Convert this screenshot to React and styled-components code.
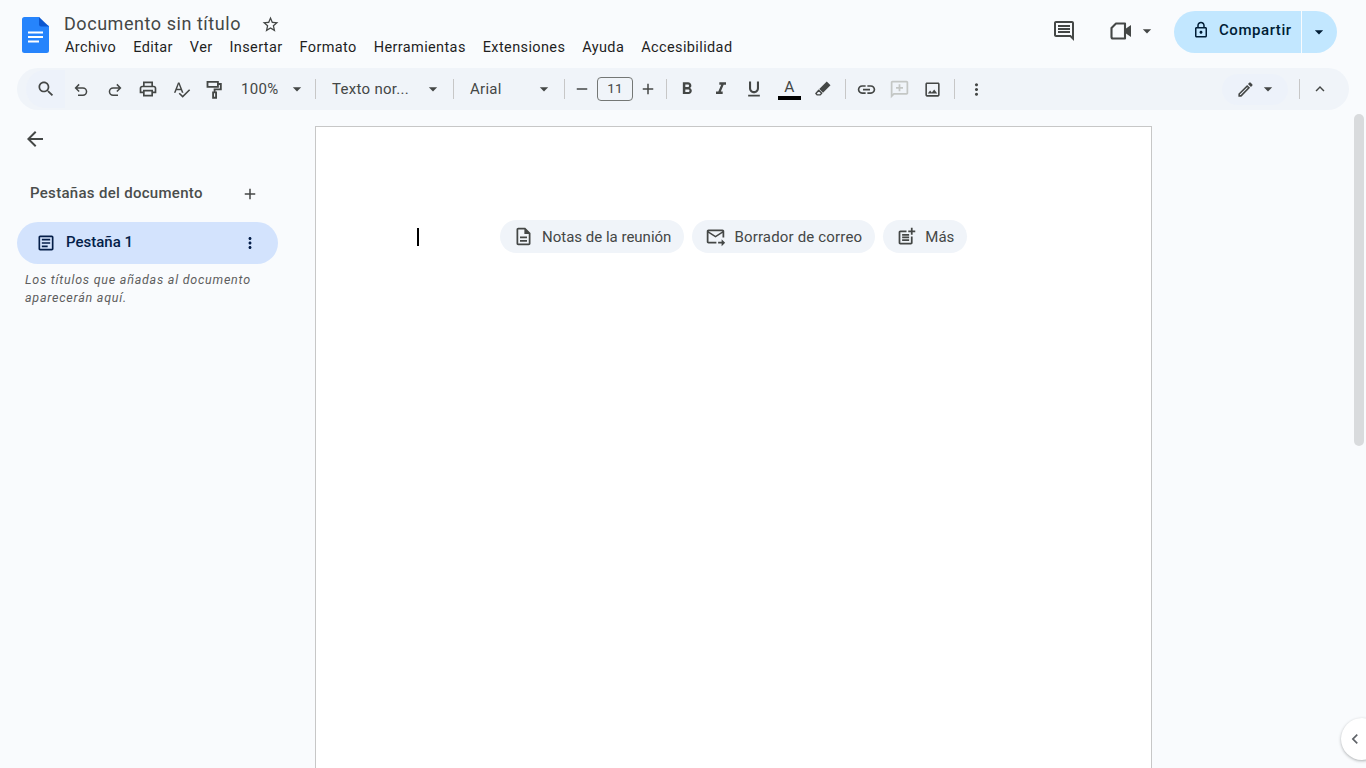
import React from 'react';
import styled, { createGlobalStyle } from 'styled-components';

const Global = createGlobalStyle`
  html, body { margin: 0; padding: 0; height: 100%; overflow: hidden; background: #f9fbfd; }
  * { box-sizing: border-box; }
  body { font-family: Roboto, "Liberation Sans", sans-serif; color: #444746; }
`;

const Page = styled.div`
  position: relative;
  width: 1366px;
  height: 768px;
  overflow: hidden;
  background: #f9fbfd;
  display: flex;
  flex-direction: column;
`;

const Header = styled.header`
  height: 68px;
  flex: none;
  display: flex;
  align-items: flex-start;
  padding: 17px 29px 0 22px;
`;
const LogoWrap = styled.div`
  width: 27px;
  height: 36px;
  flex: none;
  margin-right: 15px;
`;
const TitleCol = styled.div`
  display: flex;
  flex-direction: column;
`;
const TitleRow = styled.div`
  display: flex;
  align-items: center;
  height: 16px;
  margin-top: -1px;
`;
const Title = styled.div`
  font-size: 18px;
  letter-spacing: 0.55px;
  color: #444746;
  line-height: 16px;
  white-space: nowrap;
`;
const StarWrap = styled.span`
  display: flex;
  margin-left: 20px;
  color: #444746;
`;
const Menu = styled.nav`
  display: flex;
  gap: 17px;
  margin-top: 8px;
  margin-left: 1px;
`;
const MenuItem = styled.span`
  font-size: 14.5px;
  letter-spacing: 0.38px;
  line-height: 16px;
  color: #1f1f1f;
  white-space: nowrap;
`;
const HeaderRight = styled.div`
  margin-left: auto;
  display: flex;
  align-items: center;
  margin-top: -6px;
  height: 42px;
`;
const HeadIcon = styled.span`
  display: flex;
  margin-top: -2px;
  color: #444746;
`;
const VideoGroup = styled.span`
  display: flex;
  align-items: center;
  gap: 4px;
  margin-left: 33px;
  margin-top: -2px;
  color: #444746;
`;
const Share = styled.div`
  display: flex;
  margin-left: 17px;
  height: 42px;
  width: 163px;
  border-radius: 21px;
  overflow: hidden;
  background: #c2e7ff;
  color: #001d35;
`;
const ShareMain = styled.div`
  width: 127px;
  display: flex;
  align-items: center;
  padding: 0 0 4px 18px;
  gap: 9px;
  font-size: 15px;
  font-weight: 500;
  letter-spacing: 0.55px;
`;
const ShareDrop = styled.div`
  flex: 1;
  border-left: 1px solid #f9fbfd;
  display: flex;
  align-items: center;
  justify-content: center;
  padding-right: 2px;
`;

const Toolbar = styled.div`
  flex: none;
  margin: 0 17px;
  height: 42px;
  width: 1332px;
  border-radius: 21px;
  background: #f0f4f9;
  display: flex;
  align-items: center;
  padding-left: 9px;
  color: #444746;
`;
const SearchBtn = styled.span`
  width: 39px;
  height: 38px;
  border-radius: 19px 0 0 19px;
  background: #edf2fa;
  display: flex;
  align-items: center;
  justify-content: center;
`;
const ToolBtn = styled.span`
  width: 33.4px;
  height: 32px;
  flex: none;
  display: flex;
  align-items: center;
  justify-content: center;
  margin-left: ${p => p.$ml ?? 0}px;
  color: ${p => p.$muted ? '#c4c7c5' : '#444746'};
`;
const HookWrap = styled.span`
  display: flex;
  margin: 2px 1px 0 0;
`;
const Drop = styled.span`
  width: ${p => p.$w}px;
  flex: none;
  display: flex;
  align-items: center;
  justify-content: space-between;
  padding: 0 ${p => p.$pr ?? 3}px 0 9px;
  font-size: 15px;
  letter-spacing: 0.3px;
  color: #444746;
  white-space: nowrap;
`;
const Sep = styled.span`
  width: 1px;
  height: 20px;
  flex: none;
  background: #c7c7c7;
  margin: 0 ${p => p.$r ?? 7}px 0 ${p => p.$l ?? 7}px;
`;
const SizeBtn = styled.span`
  width: 20px;
  flex: none;
  display: flex;
  justify-content: center;
`;
const SizeBox = styled.span`
  width: 36px;
  height: 24px;
  flex: none;
  margin: 0 5px;
  border: 1px solid #747775;
  border-radius: 4px;
  display: flex;
  align-items: center;
  justify-content: center;
  font-size: 13.5px;
  color: #444746;
  padding-bottom: 2px;
`;
const ColorA = styled.span`
  display: flex;
  flex-direction: column;
  align-items: center;
  width: 23px;
`;
const ColorLetter = styled.span`
  font-size: 15.5px;
  line-height: 18px;
  color: #444746;
`;
const ColorBar = styled.span`
  width: 23px;
  height: 4px;
  background: #000;
`;
const ToolRight = styled.div`
  margin-left: auto;
  display: flex;
  align-items: center;
`;
const ModePill = styled.span`
  width: 66px;
  height: 31px;
  border-radius: 16px;
  background: #edf2fa;
  display: flex;
  align-items: center;
  padding-left: 14px;
  gap: 3px;
`;
const ModeSep = styled.span`
  width: 1px;
  height: 20px;
  background: #c7c7c7;
  margin-left: 11px;
`;
const Collapse = styled.span`
  width: 40px;
  margin-right: 9px;
  display: flex;
  justify-content: center;
`;

const Body = styled.div`
  flex: 1;
  display: flex;
  min-height: 0;
`;
const Side = styled.aside`
  width: 315px;
  flex: none;
  padding: 17px 0 0 17px;
`;
const BackBtn = styled.div`
  display: flex;
  margin-left: 6px;
  color: #444746;
`;
const SideHead = styled.div`
  display: flex;
  align-items: center;
  margin-top: 33px;
  margin-left: 13px;
  width: 229px;
  justify-content: space-between;
  height: 20px;
`;
const SideTitle = styled.span`
  font-size: 15px;
  font-weight: 500;
  letter-spacing: 0.3px;
  color: #4a4d4c;
  margin-top: -2px;
`;
const TabItem = styled.div`
  margin-top: 18px;
  width: 261px;
  height: 42px;
  border-radius: 21px;
  background: #d3e3fd;
  display: flex;
  align-items: center;
  padding: 0 19px;
  color: #041e49;
`;
const TabText = styled.span`
  margin: 0 0 3px 10px;
  flex: 1;
  font-size: 15px;
  font-weight: 500;
`;
const Hint = styled.p`
  margin: 7px 0 0 8px;
  width: 250px;
  font-size: 12.5px;
  font-style: italic;
  line-height: 18px;
  letter-spacing: 0.76px;
  color: #5e5e5e;
`;
const Doc = styled.main`
  width: 837px;
  height: 700px;
  margin-top: 16px;
  flex: none;
  background: #fff;
  border: 1px solid #c7c7c7;
  border-bottom: 0;
  display: flex;
  align-items: flex-start;
  padding: 93px 0 0 184px;
  position: relative;
`;
const Cursor = styled.span`
  position: absolute;
  left: 101px;
  top: 101px;
  width: 2px;
  height: 18px;
  background: #000;
`;
const Chips = styled.div`
  display: flex;
  gap: 8px;
`;
const Chip = styled.div`
  height: 33px;
  border-radius: 17px;
  background: #f0f4f9;
  display: flex;
  align-items: center;
  padding: 0 13px;
  gap: 8px;
  font-size: 15px;
  letter-spacing: ${p => p.$ls ?? 0}px;
  color: #444746;
  white-space: nowrap;
`;
const ChipLabel = styled.span`
  margin-top: 1px;
`;
const Scrollbar = styled.div`
  position: absolute;
  left: 1354px;
  top: 114px;
  width: 10px;
  height: 332px;
  border-radius: 5px;
  background: #d9dbdd;
`;
const SideToggle = styled.div`
  position: absolute;
  left: 1341px;
  top: 718px;
  width: 42px;
  height: 42px;
  border-radius: 50%;
  background: #fff;
  box-shadow: 0 1px 3px rgba(60,64,67,.4);
  display: flex;
  align-items: center;
  padding-left: 4px;
  color: #5f6368;
`;

const I = ({ s = 18, d, children, fill = 'currentColor' }) => (
  <svg width={s} height={s} viewBox="0 0 24 24" fill={fill} aria-hidden="true">
    {d && <path d={d} />}
    {children}
  </svg>
);
const Caret = ({ c = 'currentColor' }) => (
  <svg width="20" height="20" viewBox="0 0 24 24" fill={c} aria-hidden="true"><path d="M7 10l5 5 5-5z" /></svg>
);

const Logo = () => (
  <svg width="27" height="36" viewBox="0 0 27 36" aria-hidden="true">
    <path d="M17 0H2.5A2.5 2.5 0 0 0 0 2.5v31A2.5 2.5 0 0 0 2.5 36h22a2.5 2.5 0 0 0 2.5-2.5V9l-6-3z" fill="#2684fc" />
    <path d="M17 0l10 9.5H19a2 2 0 0 1-2-2z" fill="#0b57d0" />
    <path d="M6 14.5h15v2H6zM6 19h15v2H6zM6 23.5h11v2H6z" fill="#fff" />
  </svg>
);

const P = {
  search: 'M15.5 14h-.79l-.28-.27C15.41 12.59 16 11.11 16 9.5 16 5.91 13.09 3 9.5 3S3 5.91 3 9.5 5.91 16 9.5 16c1.61 0 3.09-.59 4.23-1.57l.27.28v.79l5 4.99L20.49 19l-4.99-5zm-6 0C7.01 14 5 11.99 5 9.5S7.01 5 9.5 5 14 7.01 14 9.5 11.99 14 9.5 14z',
  print: 'M19 8h-1V3H6v5H5c-1.66 0-3 1.34-3 3v6h4v4h12v-4h4v-6c0-1.66-1.34-3-3-3zM8 5h8v3H8V5zm8 12v2H8v-4h8v2zm2-2v-2H6v2H4v-4c0-.55.45-1 1-1h14c.55 0 1 .45 1 1v4h-2z',
  spell: 'M12.45 16h2.09L9.43 3H7.57L2.46 16h2.09l1.12-3h5.64l1.14 3zm-6.02-5L8.5 5.48 10.57 11H6.43zm15.16.59l-8.09 8.09L9.83 16l-1.41 1.41 5.09 5.09L23 13l-1.41-1.41z',
  bold: 'M15.6 10.79c.97-.67 1.65-1.77 1.65-2.79 0-2.26-1.75-4-4-4H7v14h7.04c2.09 0 3.71-1.7 3.71-3.79 0-1.52-.86-2.82-2.15-3.42zM10 6.5h3c.83 0 1.5.67 1.5 1.5s-.67 1.5-1.5 1.5h-3v-3zm3.5 9H10v-3h3.5c.83 0 1.5.67 1.5 1.5s-.67 1.5-1.5 1.5z',
  italic: 'M10 4v3h2.21l-3.42 8H6v3h8v-3h-2.21l3.42-8H18V4z',
  underline: 'M12 17c3.31 0 6-2.69 6-6V3h-2.5v8c0 1.93-1.57 3.5-3.5 3.5S8.5 12.93 8.5 11V3H6v8c0 3.31 2.69 6 6 6zm-7 2v2h14v-2H5z',
  link: 'M3.9 12c0-1.71 1.39-3.1 3.1-3.1h4V7H7c-2.76 0-5 2.24-5 5s2.24 5 5 5h4v-1.9H7c-1.71 0-3.1-1.39-3.1-3.1zM8 13h8v-2H8v2zm9-6h-4v1.9h4c1.71 0 3.1 1.39 3.1 3.1s-1.39 3.1-3.1 3.1h-4V17h4c2.76 0 5-2.24 5-5s-2.24-5-5-5z',
  addComment: 'M20 2H4c-1.1 0-2 .9-2 2v18l4-4h14c1.1 0 2-.9 2-2V4c0-1.1-.9-2-2-2zm0 14H5.17L4 17.17V4h16v12zM13 6h-2v3H8v2h3v3h2v-3h3V9h-3z',
  image: 'M19 5v14H5V5h14m0-2H5c-1.1 0-2 .9-2 2v14c0 1.1.9 2 2 2h14c1.1 0 2-.9 2-2V5c0-1.1-.9-2-2-2zM14.14 11.86l-3 3.87L9 13.14 6 17h12l-3.86-5.14z',
  pencil: 'M14.06 9.02l.92.92L5.92 19H5v-.92l9.06-9.06M17.66 3c-.25 0-.51.1-.7.29l-1.83 1.83 3.75 3.75 1.83-1.83c.39-.39.39-1.02 0-1.41l-2.34-2.34c-.2-.2-.45-.29-.71-.29zm-3.6 3.19L3 17.25V21h3.75L17.81 9.94l-3.75-3.75z',
  star: 'M22 9.24l-7.19-.62L12 2 9.19 8.63 2 9.24l5.46 4.73L5.82 21 12 17.27 18.18 21l-1.63-7.03L22 9.24zM12 15.4l-3.76 2.27 1-4.28-3.32-2.88 4.38-.38L12 6.1l1.71 4.04 4.38.38-3.32 2.88 1 4.28L12 15.4z',
  chat: 'M21.99 4c0-1.1-.89-2-1.99-2H4c-1.1 0-2 .9-2 2v12c0 1.1.9 2 2 2h14l4 4-.01-18zM20 4v13.17L18.83 16H4V4h16zM6 12h12v2H6zm0-3h12v2H6zm0-3h12v2H6z',
  lock: 'M18 8h-1V6c0-2.76-2.24-5-5-5S7 3.24 7 6v2H6c-1.1 0-2 .9-2 2v10c0 1.1.9 2 2 2h12c1.1 0 2-.9 2-2V10c0-1.1-.9-2-2-2zM9 6c0-1.66 1.34-3 3-3s3 1.34 3 3v2H9V6zm9 14H6V10h12v10zm-6-3c1.1 0 2-.9 2-2s-.9-2-2-2-2 .9-2 2 .9 2 2 2z',
  desc: 'M8 16h8v2H8zm0-4h8v2H8zm6-10H6c-1.1 0-2 .9-2 2v16c0 1.1.89 2 1.99 2H18c1.1 0 2-.9 2-2V8l-6-6zm4 18H6V4h7v5h5v11z',
  article: 'M19 5v14H5V5h14m0-2H5c-1.1 0-2 .9-2 2v14c0 1.1.9 2 2 2h14c1.1 0 2-.9 2-2V5c0-1.1-.9-2-2-2zM14 17H7v-2h7v2zm3-4H7v-2h10v2zm0-4H7V7h10v2z',
  forward: 'M20 4H4c-1.1 0-2 .9-2 2v12c0 1.1.9 2 2 2h9v-2H4V8l8 5 8-5v5h2V6c0-1.1-.9-2-2-2zm-8 7L4 6h16l-8 5zm7 4l4 4-4 4v-3h-4v-2h4v-3z',
  postAdd: 'M17 19.22H5V7h7V5H5c-1.1 0-2 .9-2 2v12c0 1.1.9 2 2 2h12c1.1 0 2-.9 2-2v-7h-2v7.22zM19 2h-2v3h-3s.01 2 0 2h3v2.99c.01.01 2 0 2 0V7h3V5h-3V2zM7 9h8v2H7zm0 3v2h8v-2zm0 3h8v2H7z',
  arrowBack: 'M20 11H7.83l5.59-5.59L12 4l-8 8 8 8 1.41-1.41L7.83 13H20v-2z',
  plus: 'M19 13h-6v6h-2v-6H5v-2h6V5h2v6h6v2z',
  minus: 'M19 13H5v-2h14v2z',
  up: 'M7.41 15.41L12 10.83l4.59 4.58L18 14l-6-6-6 6z',
  left: 'M15.41 7.41L14 6l-6 6 6 6 1.41-1.41L10.83 12z',
  dots: 'M12 8c1.1 0 2-.9 2-2s-.9-2-2-2-2 .9-2 2 .9 2 2 2zm0 2c-1.1 0-2 .9-2 2s.9 2 2 2 2-.9 2-2-.9-2-2-2zm0 6c-1.1 0-2 .9-2 2s.9 2 2 2 2-.9 2-2-.9-2-2-2z',
};

const Hook = ({ flip }) => (
  <svg width="18" height="18" viewBox="0 0 24 24" fill="none" stroke="currentColor" strokeWidth="2" style={flip ? { transform: 'scaleX(-1)' } : undefined} aria-hidden="true">
    <path d="M9.5 14L4.8 9.2l4.7-4.7M5 9.2h9.5a4.9 4.9 0 0 1 0 9.8H8" />
  </svg>
);
const Roller = () => (
  <svg width="20" height="20" viewBox="0 0 24 24" fill="none" stroke="currentColor" strokeWidth="2.2" aria-hidden="true">
    <path d="M3 3.5h12.5v6H3zM15.5 6H19v6.5h-7.5v3.5" />
    <path d="M9.7 16h3.6v6.5H9.7z" />
  </svg>
);
const Highlighter = () => (
  <svg width="18" height="18" viewBox="0 0 24 24" aria-hidden="true">
    <path d="M17 2l5 5-10 10-5-5z" fill="currentColor" />
    <path d="M6.3 13.7l4 4-2 2-3.9.2-1.9-1.9z" fill="none" stroke="currentColor" strokeWidth="1.8" strokeLinejoin="round" />
  </svg>
);
const Video = () => (
  <svg width="24" height="20" viewBox="0 0 24 20" fill="none" aria-hidden="true">
    <path d="M7 2.5h9v15H4a1.5 1.5 0 0 1-1.5-1.5V7z" stroke="currentColor" strokeWidth="2.1" strokeLinejoin="round" />
    <path d="M17 7.5l5-3.5v12l-5-3.5z" fill="currentColor" />
  </svg>
);

const menu = ['Archivo', 'Editar', 'Ver', 'Insertar', 'Formato', 'Herramientas', 'Extensiones', 'Ayuda', 'Accesibilidad'];

export default function App() {
  return (
    <Page>
      <Global />
      <Header>
        <LogoWrap><Logo /></LogoWrap>
        <TitleCol>
          <TitleRow>
            <Title>Documento sin título</Title>
            <StarWrap><I s={19} d={P.star} /></StarWrap>
          </TitleRow>
          <Menu>{menu.map(m => <MenuItem key={m}>{m}</MenuItem>)}</Menu>
        </TitleCol>
        <HeaderRight>
          <HeadIcon><I s={24} d={P.chat} /></HeadIcon>
          <VideoGroup><Video /><Caret /></VideoGroup>
          <Share>
            <ShareMain><I s={18} d={P.lock} /><span>Compartir</span></ShareMain>
            <ShareDrop><Caret /></ShareDrop>
          </Share>
        </HeaderRight>
      </Header>
      <Toolbar>
        <SearchBtn><I s={20} d={P.search} /></SearchBtn>
        <ToolBtn><HookWrap><Hook /></HookWrap></ToolBtn>
        <ToolBtn><HookWrap><Hook flip /></HookWrap></ToolBtn>
        <ToolBtn><I s={20} d={P.print} /></ToolBtn>
        <ToolBtn><I s={19} d={P.spell} /></ToolBtn>
        <ToolBtn><Roller /></ToolBtn>
        <Drop $w={76} $pr={1}>100%<Caret /></Drop>
        <Sep />
        <Drop $w={123}>Texto nor...<Caret /></Drop>
        <Sep />
        <Drop $w={96}>Arial<Caret /></Drop>
        <Sep />
        <SizeBtn><I d={P.minus} /></SizeBtn>
        <SizeBox>11</SizeBox>
        <SizeBtn><I d={P.plus} /></SizeBtn>
        <Sep $l={8} $r={3.5} />
        <ToolBtn><I s={20} d={P.bold} /></ToolBtn>
        <ToolBtn><I s={20} d={P.italic} /></ToolBtn>
        <ToolBtn><I s={20} d={P.underline} /></ToolBtn>
        <ToolBtn $ml={2}><ColorA><ColorLetter>A</ColorLetter><ColorBar /></ColorA></ToolBtn>
        <ToolBtn><Highlighter /></ToolBtn>
        <Sep $l={5.5} $r={3.5} />
        <ToolBtn><I s={21} d={P.link} /></ToolBtn>
        <ToolBtn $muted><I s={21} d={P.addComment} /></ToolBtn>
        <ToolBtn><I s={19} d={P.image} /></ToolBtn>
        <Sep $l={4} $r={5} />
        <ToolBtn><I s={19} d={P.dots} /></ToolBtn>
        <ToolRight>
          <ModePill><I s={19} d={P.pencil} /><Caret /></ModePill>
          <ModeSep />
          <Collapse><I d={P.up} /></Collapse>
        </ToolRight>
      </Toolbar>
      <Body>
        <Side>
          <BackBtn><I s={24} d={P.arrowBack} /></BackBtn>
          <SideHead><SideTitle>Pestañas del documento</SideTitle><I d={P.plus} /></SideHead>
          <TabItem>
            <I s={20} d={P.article} />
            <TabText>Pestaña 1</TabText>
            <I d={P.dots} />
          </TabItem>
          <Hint>Los títulos que añadas al documento aparecerán aquí.</Hint>
        </Side>
        <Doc>
          <Cursor />
          <Chips>
            <Chip><I s={21} d={P.desc} /><ChipLabel>Notas de la reunión</ChipLabel></Chip>
            <Chip $ls={0.17}><I s={21} d={P.forward} /><ChipLabel>Borrador de correo</ChipLabel></Chip>
            <Chip><I s={21} d={P.postAdd} /><ChipLabel>Más</ChipLabel></Chip>
          </Chips>
        </Doc>
      </Body>
      <Scrollbar />
      <SideToggle><I s={20} d={P.left} /></SideToggle>
    </Page>
  );
}
